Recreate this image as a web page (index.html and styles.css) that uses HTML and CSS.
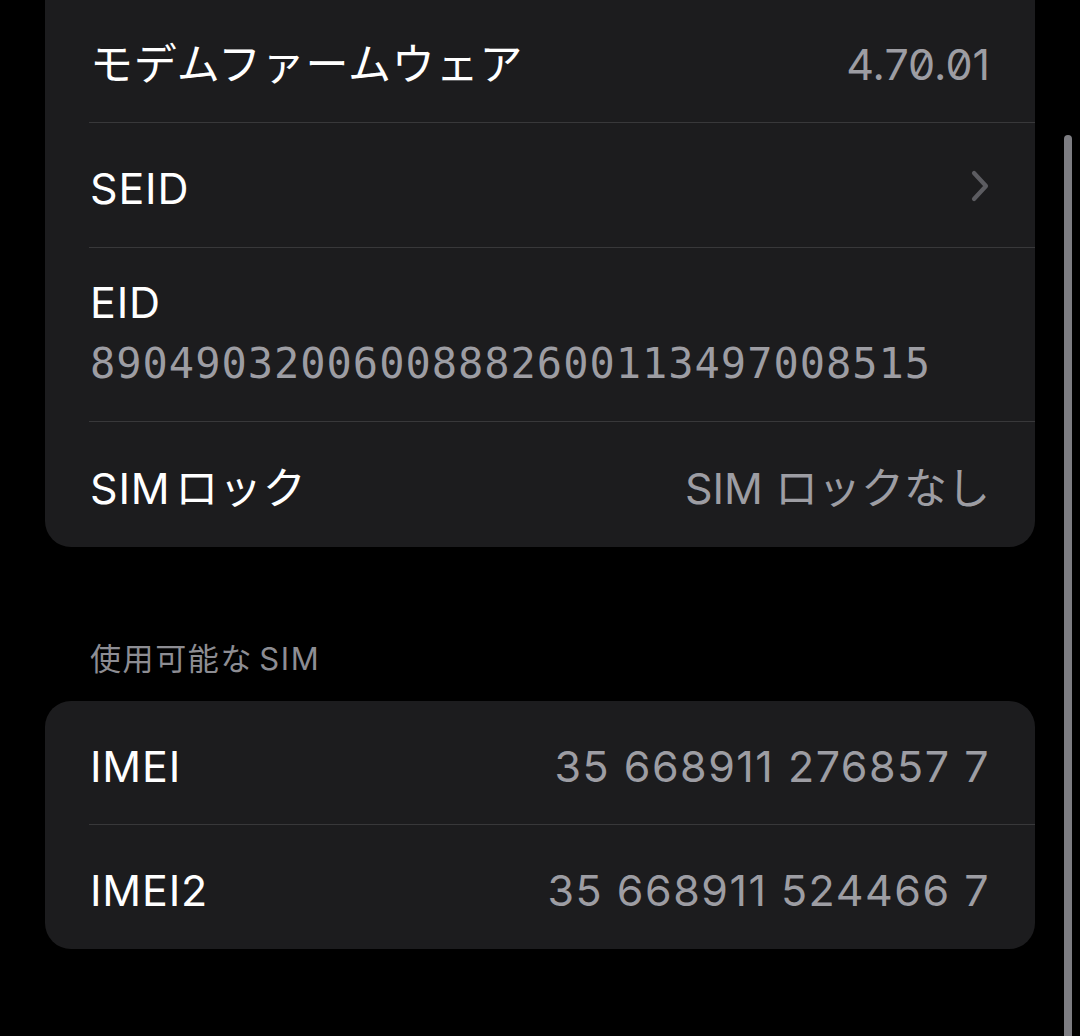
FILE: index.html
```html
<!DOCTYPE html>
<html lang="ja">
<head>
<meta charset="utf-8">
<link rel="stylesheet" href="styles.css">
</head>
<body>
<main class="page">
  <section class="card card-cut">
    <div class="row row-first">
      <span class="label">モデムファームウェア</span>
      <span class="value slashed">4.70.01</span>
    </div>
    <div class="row row-tall">
      <span class="label">SEID</span>
      <svg class="chev" width="22" height="32" viewBox="0 0 22 32"><path d="M5 3 L17 16 L5 29" fill="none" stroke="#5c5c61" stroke-width="4.2" stroke-linecap="round" stroke-linejoin="round"/></svg>
    </div>
    <div class="row row-stack">
      <span class="label">EID</span>
      <span class="value mono eid">89049032006008882600113497008515</span>
    </div>
    <div class="row row-last">
      <span class="label tight">SIM ロック</span>
      <span class="value">SIM ロックなし</span>
    </div>
  </section>

  <h2 class="section-title">使用可能な SIM</h2>

  <section class="card">
    <div class="row">
      <span class="label">IMEI</span>
      <span class="value digits">35 668911 276857 7</span>
    </div>
    <div class="row row-last">
      <span class="label">IMEI2</span>
      <span class="value digits">35 668911 524466 7</span>
    </div>
  </section>
</main>
<div class="scrollbar"></div>
</body>
</html>
```
FILE: styles.css
```css
html, body {
  margin: 0;
  padding: 0;
  background: #000;
  height: 100%;
  overflow: hidden;
}
body {
  font-family: Inter, "Noto Sans CJK JP", sans-serif;
  color: #fff;
  position: relative;
}
.page {
  padding: 0 45px;
  display: flex;
  flex-direction: column;
}
.card {
  background: #1c1c1e;
  border-radius: 26px;
  padding-left: 44px;
}
.card-cut {
  border-top-left-radius: 0;
  border-top-right-radius: 0;
}
.row {
  height: 124px;
  box-sizing: border-box;
  border-bottom: 1px solid #38383a;
  display: flex;
  align-items: center;
  justify-content: space-between;
  padding-left: 1px;
  padding-right: 45px;
  padding-top: 6px;
}
.row-first {
  height: 123px;
}
.row-tall {
  height: 125px;
}
.row-last {
  border-bottom: none;
  height: 124px;
}
.card-cut .row-last {
  height: 125px;
}
.row-stack {
  height: 174px;
  flex-direction: column;
  align-items: flex-start;
  justify-content: flex-start;
  padding-top: 30px;
}
.label {
  font-size: 43px;
  line-height: 48px;
  font-weight: 400;
  letter-spacing: 0.8px;
}
.tight {
  word-spacing: -8px;
}
.value {
  font-size: 43px;
  line-height: 48px;
  color: #9d9da3;
  letter-spacing: 0;
}
.slashed {
  font-feature-settings: "zero" 1;
  letter-spacing: 0;
}
.digits {
  letter-spacing: 1.5px;
}
.mono {
  font-family: "DejaVu Sans Mono", monospace;
  font-size: 42px;
}
.eid {
  margin-top: 14px;
  letter-spacing: 1px;
}
.chev {
  display: block;
  margin-right: -1px;
  margin-top: -4px;
}
.section-title {
  margin: 94px 0 0 45px;
  font-size: 31px;
  line-height: 36px;
  font-weight: 400;
  color: #8d8d93;
  letter-spacing: 1.6px;
  word-spacing: -4px;
  height: 60px;
}
.scrollbar {
  position: absolute;
  right: 8px;
  top: 135px;
  width: 8px;
  height: 960px;
  border-radius: 4px;
  background: #7d7d82;
}
```
